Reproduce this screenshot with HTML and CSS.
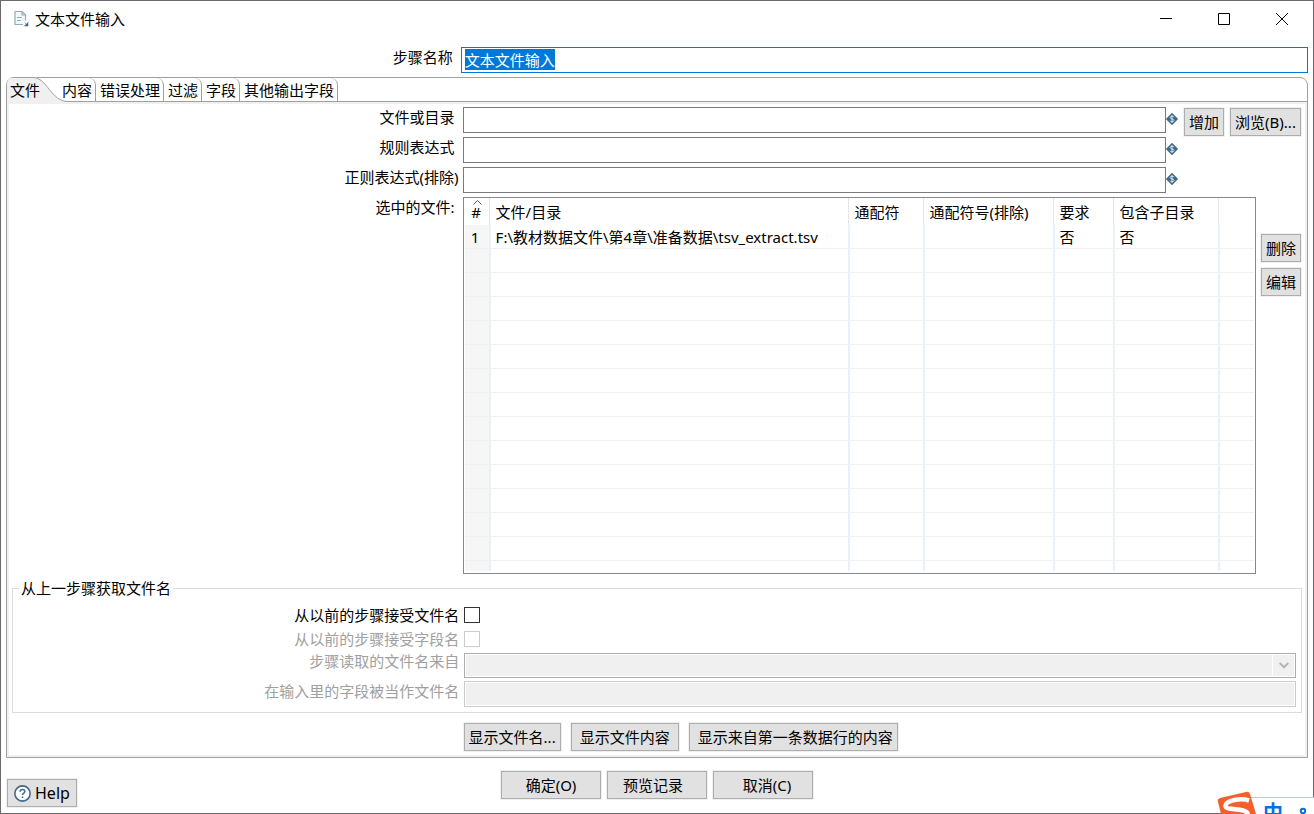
FILE: index.html
```html
<!DOCTYPE html>
<html lang="zh-CN">
<head>
<meta charset="utf-8">
<title>文本文件输入</title>
<link rel="stylesheet" href="styles.css">
</head>
<body>
<svg class="defs" aria-hidden="true">
  <symbol id="variable" viewBox="0 0 12 12">
    <path d="M6 .8L11.200 6L6 11.200L.8 6Z" fill="#40698a" stroke="#40698a" stroke-width="1.400" stroke-linejoin="round"/>
    <path d="M8 4.200C7.600 2.900 4.200 2.700 4.100 4.500C4.100 6.300 8 5.600 8 7.500C7.900 9.300 4.300 9.100 4 7.700M6 2V10" fill="none" stroke="#dbe6ee" stroke-width="1"/>
  </symbol>
</svg>
<div class="window">
  <header class="titlebar">
    <svg class="app-icon" viewBox="0 0 15 16" aria-hidden="true">
      <path d="M9 13.500H1V.5H8L11.500 4V9.500" fill="#f2f8fb" stroke="#8fabbd" stroke-width="1.200"/>
      <path d="M8 .5V4H11.500M3 6.500H8M3 9.500H7" fill="none" stroke="#8fabbd" stroke-width="1.200"/>
      <path d="M10.500 11.500L13 14M14 11.500V15H10.500Z" fill="#40698a" stroke="#40698a" stroke-width=".6"/>
    </svg>
    <h1>文本文件输入</h1>
    <div class="window-controls">
      <button type="button" aria-label="最小化"><svg viewBox="0 0 12 12"><path d="M0 5.500H12"/></svg></button>
      <button type="button" aria-label="最大化"><svg viewBox="0 0 12 12"><path d="M.5.5H11.500V11.500H.5Z"/></svg></button>
      <button type="button" aria-label="关闭"><svg viewBox="0 0 12 12"><path d="M0 0L12 12M12 0L0 12"/></svg></button>
    </div>
  </header>

  <main>
    <div class="name-row">
      <label for="step">步骤名称</label>
      <input id="step" class="step-input" type="text" value="文本文件输入">
    </div>

    <section class="folder">
      <div class="tabs" role="tablist">
        <button type="button" role="tab" class="tab active" aria-selected="true">
          <svg class="tab-curve" viewBox="0 0 61 25" aria-hidden="true">
            <path d="M0 25V0H26C40 0 44 24.500 61 24.500V25Z" fill="#f0f0f0"/>
            <path d="M0 .5H26C40 .5 44 24.500 61 24.500" fill="none" stroke="#a0a0a0"/>
          </svg>
          <span>文件</span>
        </button>
        <button type="button" role="tab" class="tab">内容</button>
        <button type="button" role="tab" class="tab">错误处理</button>
        <button type="button" role="tab" class="tab">过滤</button>
        <button type="button" role="tab" class="tab">字段</button>
        <button type="button" role="tab" class="tab">其他输出字段</button>
      </div>

      <div class="panel" role="tabpanel">
        <div class="field">
          <label for="path">文件或目录</label>
          <input id="path" type="text">
          <svg class="variable"><use href="#variable"/></svg>
          <div class="side"><button type="button">增加</button><button type="button">浏览(B)...</button></div>
        </div>
        <div class="field">
          <label for="regex">规则表达式</label>
          <input id="regex" type="text">
          <svg class="variable"><use href="#variable"/></svg>
          <div class="side"></div>
        </div>
        <div class="field">
          <label class="wide" for="exclude">正则表达式(排除)</label>
          <input id="exclude" type="text">
          <svg class="variable"><use href="#variable"/></svg>
          <div class="side"></div>
        </div>

        <div class="files">
          <span class="files-label" id="files-label">选中的文件:</span>
          <div class="grid-box">
            <table aria-labelledby="files-label">
              <colgroup><col class="c-num"><col class="c-file"><col class="c-mask"><col class="c-exclude"><col class="c-req"><col class="c-sub"><col></colgroup>
              <thead>
                <tr><th class="num"><svg class="sort" viewBox="0 0 9 5" aria-hidden="true"><path d="M.5 4.500L4.500.5L8.500 4.500"/></svg>#</th><th>文件/目录</th><th>通配符</th><th>通配符号(排除)</th><th>要求</th><th>包含子目录</th><th></th></tr>
              </thead>
              <tbody>
                <tr><td class="num">1</td><td>F:\教材数据文件\第4章\准备数据\tsv_extract.tsv</td><td></td><td></td><td>否</td><td>否</td><td></td></tr>
                <tr><td></td><td></td><td></td><td></td><td></td><td></td><td></td></tr>
                <tr><td></td><td></td><td></td><td></td><td></td><td></td><td></td></tr>
                <tr><td></td><td></td><td></td><td></td><td></td><td></td><td></td></tr>
                <tr><td></td><td></td><td></td><td></td><td></td><td></td><td></td></tr>
                <tr><td></td><td></td><td></td><td></td><td></td><td></td><td></td></tr>
                <tr><td></td><td></td><td></td><td></td><td></td><td></td><td></td></tr>
                <tr><td></td><td></td><td></td><td></td><td></td><td></td><td></td></tr>
                <tr><td></td><td></td><td></td><td></td><td></td><td></td><td></td></tr>
                <tr><td></td><td></td><td></td><td></td><td></td><td></td><td></td></tr>
                <tr><td></td><td></td><td></td><td></td><td></td><td></td><td></td></tr>
                <tr><td></td><td></td><td></td><td></td><td></td><td></td><td></td></tr>
                <tr><td></td><td></td><td></td><td></td><td></td><td></td><td></td></tr>
                <tr><td></td><td></td><td></td><td></td><td></td><td></td><td></td></tr>
                <tr class="tail"><td></td><td></td><td></td><td></td><td></td><td></td><td></td></tr>
              </tbody>
            </table>
          </div>
          <div class="file-actions">
            <button type="button">删除</button>
            <button type="button">编辑</button>
          </div>
        </div>

        <fieldset>
          <legend>从上一步骤获取文件名</legend>
          <div class="option check">
            <label for="accept">从以前的步骤接受文件名</label>
            <input id="accept" type="checkbox">
          </div>
          <div class="option check disabled">
            <label for="pass">从以前的步骤接受字段名</label>
            <input id="pass" type="checkbox" disabled>
          </div>
          <div class="option disabled">
            <label for="source">步骤读取的文件名来自</label>
            <div class="select-box">
              <select id="source" disabled><option></option></select>
              <svg class="chevron" viewBox="0 0 10 7" aria-hidden="true"><path d="M.7 1L5 5.300L9.300 1"/></svg>
            </div>
          </div>
          <div class="option disabled">
            <label for="fieldname">在输入里的字段被当作文件名</label>
            <input id="fieldname" type="text" disabled>
          </div>
        </fieldset>

        <div class="previews">
          <button type="button">显示文件名...</button>
          <button type="button" class="roomy">显示文件内容</button>
          <button type="button" class="first-row">显示来自第一条数据行的内容</button>
        </div>
      </div>
    </section>
  </main>

  <footer>
    <button type="button" class="help">
      <svg viewBox="0 0 16 16" aria-hidden="true"><circle cx="8" cy="8" r="7.200" fill="#fff" stroke="#40698a" stroke-width="1.500"/><path d="M5.800 6.300C5.800 3.500 10.200 3.600 10.200 6.200C10.200 7.700 8 7.600 8 9.500M8 10.800V12.300" fill="none" stroke="#40698a" stroke-width="1.500"/></svg>
      Help
    </button>
    <div class="actions">
      <button type="button">确定(O)</button>
      <button type="button" class="preview">预览记录</button>
      <button type="button" class="cancel">取消(C)</button>
    </div>
  </footer>
</div>

<aside class="ime" aria-label="输入法">
  <div class="ime-bar"><span>中</span><svg class="ime-punct" viewBox="0 0 16 9" aria-hidden="true"><circle cx="5" cy="4" r="2.200"/><path d="M10 8H14"/></svg></div>
  <svg class="ime-logo" viewBox="0 0 40 23" aria-hidden="true">
    <path d="M3 7L29 1Q32 0 33 3L39 23H4L1 11Q0 8 3 7Z" fill="#f4602a"/>
    <path d="M32 9.500C24 7 9 9 8.500 15C8.500 20 29 16 31 23" fill="none" stroke="#fff" stroke-width="4.500"/>
  </svg>
</aside>
<script src="main.js"></script>
</body>
</html>
```
FILE: main.js
```js
const step = document.getElementById('step');
step.focus();
step.select();
```
FILE: styles.css
```css
* { box-sizing: border-box; }

body {
  margin: 0;
  font: 15px/20px "Noto Sans", "Noto Sans CJK SC", sans-serif;
  color: #000;
  background: #fff;
}

.defs { display: none; }

.window {
  min-height: 100vh;
  display: flex;
  flex-direction: column;
  border: 1px solid #6b696b;
}

button, input, select { font: inherit; color: inherit; margin: 0; border-radius: 0; }

button {
  height: 28px;
  padding: 0 4px;
  border: 1px solid #adadad;
  background: #e1e1e1;
  box-shadow: 0 0 0 1px #f0f0f0;
  white-space: nowrap;
}

input[type="text"] {
  height: 26px;
  min-width: 0;
  flex: 1;
  padding: 0 3px 2px;
  border: 1px solid #7a7a7a;
  background: #fff;
  outline: none;
}

/* Title bar */
.titlebar { display: flex; align-items: center; height: 36px; padding-left: 13px; }
.app-icon { width: 15px; height: 16px; }
h1 { margin: 0 auto 0 6px; font-size: 15px; font-weight: 400; }
.window-controls { display: flex; padding-right: 2px; }
.window-controls button { width: 58px; height: 36px; border: 0; background: none; box-shadow: none; }
.window-controls svg { display: block; width: 12px; height: 12px; margin: auto; fill: none; stroke: #000; }

main { flex: 1; display: flex; flex-direction: column; padding: 10px 5px 0; }

.name-row { display: flex; margin-bottom: 4px; }
.name-row label { width: calc(35% - 1px); flex: none; padding-right: 8px; text-align: right; }
.name-row .step-input { border-color: #0078d7; }
.step-input::selection { background: #0078d7; color: #fff; }

/* Tab folder */
.folder {
  flex: 1;
  display: flex;
  flex-direction: column;
  border: 1px solid #a0a0a0;
  border-radius: 8px 8px 0 0;
}
.tabs { display: flex; height: 24px; border-bottom: 1px solid #a0a0a0; }
.tab {
  height: 23px;
  padding: 0 3px 0 4px;
  border: 0;
  border-right: 1px solid #a0a0a0;
  border-radius: 0 7px 0 0;
  background: none;
  box-shadow: none;
}
.tab.active {
  position: relative;
  width: 51px;
  padding-left: 3px;
  border: 0;
  text-align: left;
}
.tab-curve { position: absolute; left: 0; top: -1px; width: 61px; height: 25px; border-radius: 7px 0 0 0; }
.tab.active span { position: relative; }

.panel {
  flex: 1;
  display: flex;
  flex-direction: column;
  padding: 3px 0 4px;
  border: 2px solid #f0f0f0;
}

.field { display: flex; height: 30px; }
.field label, .files-label { width: 35%; flex: none; padding-right: 8px; text-align: right; }
.field label.wide { padding-right: 4px; }
.variable { width: 12px; height: 12px; margin-top: 6px; }
.side { display: flex; gap: 6px; width: 127px; padding: 1px 4px 0 6px; }
.side button:last-child { flex: 1; }

/* File list */
.files { display: flex; flex: 1; }
.grid-box { flex: 1; min-width: 0; padding: 0 1px 1px; border: 1px solid #828790; }
table { width: 100%; table-layout: fixed; border-spacing: 0; }
.c-num { width: 26px; }
.c-file { width: 359px; }
.c-mask { width: 75px; }
.c-exclude { width: 130px; }
.c-req { width: 60px; }
.c-sub { width: 105px; }
th, td { padding: 0 0 0 5px; text-align: left; white-space: nowrap; }
th { height: 27px; font-weight: 400; box-shadow: inset -1px 0 #fff, inset -2px 0 #e5e5e5; }
td { height: 24px; border-right: 2px solid #ebf1fb; border-bottom: 1px solid #f0f0f0; }
td:first-child { background: #f6f6f6; }
th:last-child { box-shadow: none; }
td:last-child { border-right: 0; }
.num { position: relative; padding: 0 3px 0 0; text-align: center; }
.sort { position: absolute; left: 8px; top: 2px; width: 9px; height: 5px; fill: none; stroke: #5c5c5c; }
.tail td { height: 10px; border-bottom: 0; }
.file-actions { display: flex; flex-direction: column; gap: 6px; padding: 37px 4px 0 5px; }

/* Options taken from the previous step */
fieldset { margin: 4px 3px 0; padding: 5px 5px 5px 2px; border: 1px solid #dcdcdc; min-width: 0; }
legend { margin-left: 4px; padding: 0 2px; }
.option { display: flex; margin-bottom: 3px; }
.option > label { width: 35%; flex: none; margin-right: 1px; padding-right: 4px; text-align: right; }
.option.check { height: 24px; align-items: center; margin: 0; }
.option:last-child { margin: 0; }
.option.disabled > label { color: #a0a0a0; }
input[type="checkbox"] { appearance: none; width: 16px; height: 16px; border: 1px solid #333; background: #fff; }
input[type="checkbox"]:disabled { border-color: #ccc; }
.option input[type="text"] { border-color: #ccc; background: #f0f0f0; box-shadow: inset 0 0 0 1px #fff; }
.select-box { position: relative; flex: 1; height: 25px; margin-top: 2px; }
select {
  appearance: none;
  display: block;
  width: 100%;
  height: 25px;
  border: 1px solid #adadad;
  background: linear-gradient(#fff, #fff) right 22px top / 1px 100% no-repeat #f0f0f0;
  box-shadow: inset 0 0 0 1px #fff;
  opacity: 1;
}
.chevron { position: absolute; right: 7px; top: 9px; width: 10px; height: 7px; fill: none; stroke: #b4b4b4; stroke-width: 2; }

.previews { display: flex; gap: 10px; margin-top: 10px; padding-left: calc(35% + 1px); }
.roomy { padding: 0 8px; }
.first-row { padding: 0 4px 0 8px; }

/* Footer */
footer { display: grid; grid-template-columns: 1fr auto 1fr; padding: 13px 6px 6px; }
.help { display: flex; align-items: center; justify-self: start; gap: 4px; margin-top: 8px; padding: 0 6px; font-size: 16px; }
.help svg { width: 17px; height: 17px; }
.actions { display: flex; gap: 6px; }
.actions button { width: 100px; }
.actions .preview { padding-right: 12px; }
.actions .cancel { padding-left: 12px; }

/* Input-method bar that floats over the dialog corner */
.ime { position: fixed; right: 0; bottom: 0; width: 97px; height: 23px; overflow: hidden; }
.ime-bar {
  position: absolute;
  left: 20px;
  right: 0;
  top: 6px;
  height: 24px;
  padding: 5px 0 0 26px;
  border-top: 1px solid #b9c9d9;
  background: #fff;
  color: #0a6fd6;
  font-size: 20px;
  font-weight: 700;
}
.ime-punct { position: absolute; right: 0; top: 9px; width: 16px; height: 9px; fill: none; stroke: #0a6fd6; stroke-width: 2; }
.ime-logo { position: absolute; left: 0; top: 0; width: 40px; height: 23px; }
```
